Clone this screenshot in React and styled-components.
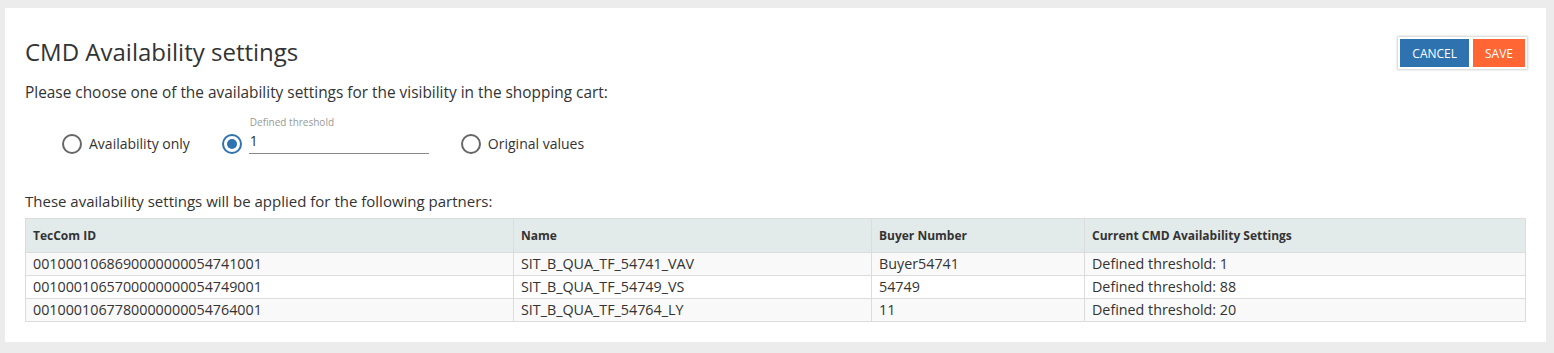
import React, { useState } from "react";
import styled, { createGlobalStyle } from "styled-components";

const Global = createGlobalStyle`
  html, body { margin: 0; padding: 0; background: #ececec; }
  body { padding: 8px 8px 11px 5px; font-family: "Open Sans", "Noto Sans", sans-serif; color: #333; }
  * { box-sizing: border-box; }
`;

const Card = styled.div`
  background: #fff;
  padding: 29px 19px 20px 20px;
  min-height: 334px;
`;

const HeaderRow = styled.div`
  display: flex;
  justify-content: space-between;
  align-items: flex-start;
`;

const Title = styled.h1`
  margin: 0;
  font-size: 24px;
  font-weight: 400;
  line-height: 30px;
  color: #333;
`;

const ButtonGroup = styled.div`
  display: flex;
  gap: 4px;
  padding: 2px;
  background: #fff;
  box-shadow: 0 0 2px 1px rgba(0, 0, 0, 0.18);
`;

const Button = styled.button`
  border: none;
  height: 28px;
  padding: 0 12px;
  font-family: inherit;
  font-size: 12px;
  color: #fff;
  background: ${(p) => (p.$variant === "save" ? "#ff6633" : "#2f72b0")};
  cursor: pointer;
`;

const Intro = styled.p`
  margin: 14px 0 0 0;
  font-size: 15.4px;
  line-height: 20px;
`;

const RadioGroup = styled.div`
  display: flex;
  align-items: flex-end;
  gap: 32px;
  margin: 12px 0 0 37px;
`;

const RadioItem = styled.label`
  display: flex;
  align-items: flex-end;
  gap: 7px;
  font-size: 14px;
  line-height: 20px;
  cursor: pointer;
`;

const RadioCircle = styled.span`
  width: 20px;
  height: 20px;
  border-radius: 50%;
  border: 2px solid ${(p) => (p.$checked ? "#2f72b0" : "#666")};
  display: flex;
  align-items: center;
  justify-content: center;
  flex-shrink: 0;
  &::after {
    content: "";
    width: 10px;
    height: 10px;
    border-radius: 50%;
    background: ${(p) => (p.$checked ? "#2f72b0" : "transparent")};
  }
`;

const Field = styled.div`
  display: flex;
  flex-direction: column;
  width: 180px;
`;

const FieldLabel = styled.span`
  font-size: 10px;
  color: #999;
  line-height: 14px;
  margin-left: 1px;
`;

const FieldInput = styled.input`
  border: none;
  border-bottom: 1px solid #888;
  outline: none;
  font-family: inherit;
  font-size: 14px;
  line-height: 20px;
  color: #333;
  padding: 1px 0 3px 1px;
  height: 25px;
  width: 100%;
  background: transparent;
`;

const SubTitle = styled.p`
  margin: 37px 0 0 0;
  font-size: 15px;
  line-height: 20px;
`;

const Table = styled.table`
  margin-top: 7px;
  width: 1501px;
  border-collapse: collapse;
`;

const Th = styled.th`
  background: #e3eaea;
  border: 1px solid #dcdcdc;
  text-align: left;
  font-size: 12px;
  font-weight: 700;
  height: 34px;
  padding: 0 7px;
  color: #333;
  width: ${(p) => p.$w}px;
`;

const Tr = styled.tr`
  background: ${(p) => (p.$odd ? "#f9f9f9" : "#fff")};
`;

const Td = styled.td`
  border: 1px solid #dcdcdc;
  font-size: 14.3px;
  line-height: 18px;
  height: 23px;
  padding: 0 7px;
`;

const rows = [
  ["0010001068690000000054741001", "SIT_B_QUA_TF_54741_VAV", "Buyer54741", "Defined threshold: 1"],
  ["0010001065700000000054749001", "SIT_B_QUA_TF_54749_VS", "54749", "Defined threshold: 88"],
  ["0010001067780000000054764001", "SIT_B_QUA_TF_54764_LY", "11", "Defined threshold: 20"],
];

export default function App() {
  const [choice, setChoice] = useState("threshold");
  return (
    <>
      <Global />
      <Card>
        <HeaderRow>
          <Title>CMD Availability settings</Title>
          <ButtonGroup>
            <Button>CANCEL</Button>
            <Button $variant="save">SAVE</Button>
          </ButtonGroup>
        </HeaderRow>
        <Intro>Please choose one of the availability settings for the visibility in the shopping cart:</Intro>
        <RadioGroup>
          <RadioItem onClick={() => setChoice("only")}>
            <RadioCircle $checked={choice === "only"} />
            Availability only
          </RadioItem>
          <RadioItem onClick={() => setChoice("threshold")}>
            <RadioCircle $checked={choice === "threshold"} />
            <Field>
              <FieldLabel>Defined threshold</FieldLabel>
              <FieldInput defaultValue="1" />
            </Field>
          </RadioItem>
          <RadioItem onClick={() => setChoice("original")}>
            <RadioCircle $checked={choice === "original"} />
            Original values
          </RadioItem>
        </RadioGroup>
        <SubTitle>These availability settings will be applied for the following partners:</SubTitle>
        <Table>
          <thead>
            <tr>
              <Th $w={488}>TecCom ID</Th>
              <Th $w={358}>Name</Th>
              <Th $w={213}>Buyer Number</Th>
              <Th>Current CMD Availability Settings</Th>
            </tr>
          </thead>
          <tbody>
            {rows.map((r, i) => (
              <Tr key={i} $odd={i % 2 === 0}>
                {r.map((c, j) => (
                  <Td key={j}>{c}</Td>
                ))}
              </Tr>
            ))}
          </tbody>
        </Table>
      </Card>
    </>
  );
}
